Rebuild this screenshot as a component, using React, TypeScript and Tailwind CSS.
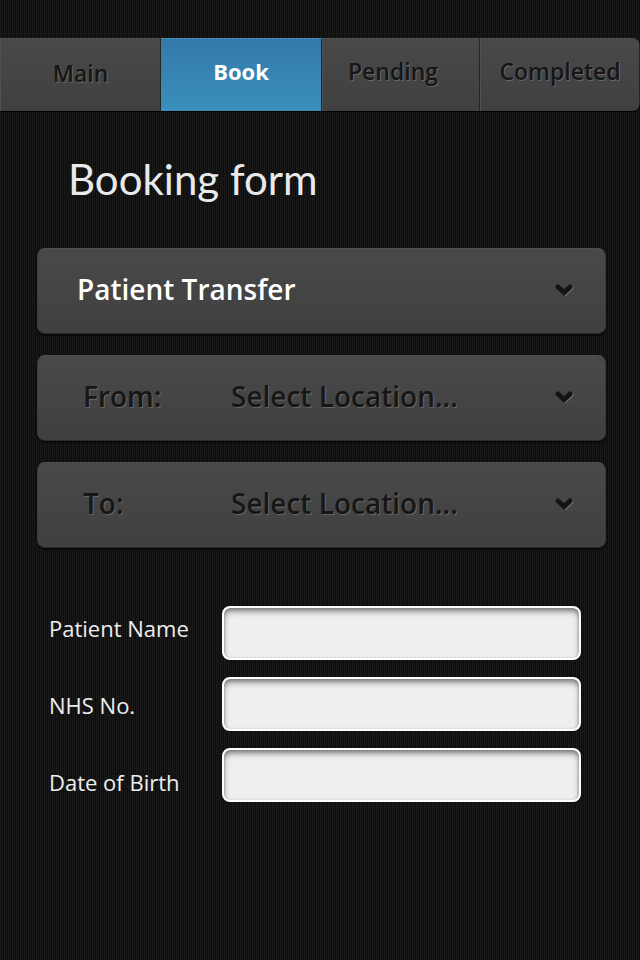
import { useId } from "react";

const tabs = [
  { label: "Main", active: false, inset: "pb-1" },
  { label: "Book", active: true, inset: "pb-2" },
  { label: "Pending", active: false, inset: "pb-2 pr-4" },
  { label: "Completed", active: false, inset: "pb-2" },
];

const fields = [
  { id: "patient-name", label: "Patient Name" },
  { id: "nhs-number", label: "NHS No." },
  { id: "birth-date", label: "Date of Birth" },
];

function Weave() {
  return (
    <svg className="absolute inset-0 -z-10 h-full w-full" aria-hidden="true">
      <defs>
        <pattern id="weave" width="4" height="6" patternUnits="userSpaceOnUse">
          <rect width="4" height="6" fill="#101010" />
          <rect x="0" y="0" width="1" height="5" fill="#1a1a1a" />
          <rect x="2" y="3" width="1" height="3" fill="#191919" />
          <rect x="2" y="0" width="1" height="2" fill="#191919" />
          <rect x="3" y="0" width="1" height="6" fill="#0d0d0d" />
        </pattern>
      </defs>
      <rect width="100%" height="100%" fill="url(#weave)" />
    </svg>
  );
}

function Chevron() {
  return (
    <svg
      className="pointer-events-none h-[14px] w-5 shrink-0"
      viewBox="0 0 20 14"
      fill="none"
      strokeWidth="5"
      strokeLinecap="round"
      strokeLinejoin="miter"
      aria-hidden="true"
    >
      <path d="M5 6 L11 11.500 L17 6" stroke="#6c6c6c" />
      <path d="M4 5 L10 10.500 L16 5" stroke="#141414" />
    </svg>
  );
}

const panel =
  "flex h-[86px] items-center rounded-lg border border-t-[#505050] border-x-[#3a3a3a] border-b-[#2b2b2b] bg-linear-to-b from-[#494949] to-[#404040] pr-[31px] pb-1 text-[28px] font-semibold shadow-[0_1px_2px_#000] focus-within:outline-2 focus-within:outline-[#3a8dbd]";

function LocationSelect({ label }: { label: string }) {
  const id = useId();
  return (
    <div className={panel + " pl-[45px] text-[#161616] [text-shadow:1px_1px_0_#666]"}>
      <label htmlFor={id} className="w-[148px] shrink-0">
        {label}
      </label>
      <select
        id={id}
        className="min-w-0 flex-1 appearance-none bg-transparent outline-none [text-shadow:1px_1px_0_#666]"
      >
        <option>Select Location...</option>
      </select>
      <Chevron />
    </div>
  );
}

export default function App() {
  return (
    <div className="relative isolate min-h-screen pt-[38px] font-['Open_Sans','Noto_Sans',sans-serif]">
      <Weave />
      <nav className="grid h-[73px] grid-cols-[161fr_161fr_158fr_160fr] overflow-hidden rounded-r-lg shadow-[0_1px_1px_#000]">
        {tabs.map((tab) => (
          <button
            key={tab.label}
            type="button"
            aria-current={tab.active ? "page" : undefined}
            className={
              (tab.active
                ? "border-t border-r border-t-[#4a8fb9] border-r-[#252525] bg-linear-to-b from-[#337aa9] to-[#3a8fbc] text-[22px] font-bold text-white "
                : "border-t border-r border-l border-t-[#505050] border-r-[#252525] border-l-[#505050] bg-linear-to-b from-[#494949] to-[#404040] text-[23px] font-semibold text-[#161616] [text-shadow:1px_1px_0_#666] ") +
              tab.inset
            }
          >
            {tab.label}
          </button>
        ))}
      </nav>
      <main>
        <h1 className="pt-9 pl-[68px] font-['Lato','Open_Sans',sans-serif] text-[42px] leading-[64px] text-[#e8eaeb]">
          Booking form
        </h1>
        <form>
          <div className="flex flex-col gap-[21px] pt-[37px] pr-[34px] pl-[37px]">
            <div className={panel + " pl-[39px] text-white"}>
              <select
                aria-label="Booking type"
                className="min-w-0 flex-1 appearance-none bg-transparent outline-none"
              >
                <option>Patient Transfer</option>
              </select>
              <Chevron />
            </div>
            <LocationSelect label="From:" />
            <LocationSelect label="To:" />
          </div>
          <div className="flex pt-[58px] pr-[59px] pl-[49px]">
            <div className="flex w-[173px] shrink-0 flex-col gap-[45px] pt-[6px] text-[22px] leading-8 text-[#eee]">
              {fields.map((field) => (
                <label key={field.id} htmlFor={field.id}>
                  {field.label}
                </label>
              ))}
            </div>
            <div className="flex min-w-0 flex-1 flex-col gap-[17px]">
              {fields.map((field) => (
                <input
                  key={field.id}
                  id={field.id}
                  type="text"
                  className="h-[54px] w-full rounded-lg border-2 border-white bg-[#efefef] px-4 text-[22px] text-[#222] shadow-[inset_0_4px_6px_-1px_#777,inset_0_1px_3px_#aaa] outline-none focus:border-[#3a8dbd]"
                />
              ))}
            </div>
          </div>
        </form>
      </main>
    </div>
  );
}
